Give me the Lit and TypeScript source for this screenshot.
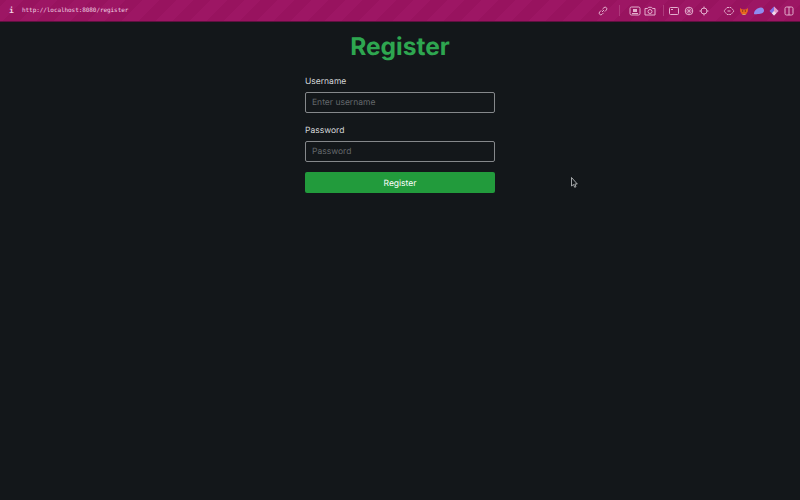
import { LitElement, html, css, svg } from 'lit';
import { customElement } from 'lit/decorators.js';

const line = (body: unknown) => html`<svg class="ico" width="12" height="12" viewBox="0 0 12 12" fill="none" stroke="#e3aecd" stroke-width="1">${body}</svg>`;

@customElement('app-root')
export class AppRoot extends LitElement {
  static styles = css`
    :host {
      display: block;
      position: relative;
      width: 800px;
      height: 500px;
      overflow: hidden;
      background: #13171a;
      font-family: Inter, 'Liberation Sans', sans-serif;
      text-rendering: geometricPrecision;
    }

    .bar {
      display: flex;
      align-items: center;
      height: 22px;
      box-sizing: border-box;
      padding-left: 9px;
      background: repeating-linear-gradient(
        -45deg,
        #98135f 0 12px,
        #9d1664 12px 24px
      );
      border-bottom: 1px solid #5f1040;
    }

    .info {
      width: 6px;
      color: #f3d5e6;
      font: 700 8px 'DejaVu Sans Mono', monospace;
    }

    .url {
      margin-left: 7px;
      color: #f0cfe2;
      font: 6px/10px 'DejaVu Sans Mono', monospace;
      letter-spacing: -0.07px;
    }

    .tools {
      display: flex;
      align-items: center;
      margin-left: auto;
      padding-right: 5px;
    }

    .ico {
      display: block;
    }

    .t1 { margin-right: 10px; }
    .t2 { margin-right: 3px; }
    .t3 { margin-right: 7px; }
    .t4 { margin-right: 13px; }

    .sep {
      width: 1px;
      height: 11px;
      background: #ad3a7c;
    }

    .s1 { margin-right: 9px; }
    .s2 { margin-right: 4px; }

    main {
      display: flex;
      flex-direction: column;
      width: 190px;
      margin: 0 auto;
    }

    h1 {
      margin: 7px 0 1px;
      text-align: center;
      color: #2ea650;
      font-size: 24.5px;
      line-height: 34px;
      font-weight: 700;
    }

    label {
      margin-top: 10px;
      color: #d4d6d8;
      font-size: 8.5px;
      line-height: 17px;
    }

    .input {
      box-sizing: border-box;
      height: 21px;
      margin-top: 1px;
      padding-left: 6px;
      border: 1px solid #85888b;
      border-radius: 2px;
      background: #13171a;
      color: #63676b;
      font-size: 8.5px;
      line-height: 21px;
    }

    button {
      height: 21px;
      margin-top: 10px;
      padding: 2px 0 0;
      border: none;
      border-radius: 2px;
      background: #229b3c;
      color: #fff;
      font: 8.5px Inter, 'Liberation Sans', sans-serif;
      text-rendering: geometricPrecision;
    }

    .cursor {
      position: absolute;
      left: 571px;
      top: 177px;
    }
  `;

  render() {
    return html`
      <div class="bar">
        <span class="info">i</span>
        <span class="url">http://localhost:8080/register</span>
        <div class="tools">
          <span class="t1">${line(svg`<path d="M5 7l2-2M4.200 5.400 2.600 7a1.700 1.700 0 0 0 2.400 2.400l1.600-1.600M5.400 4.200 7 2.600A1.700 1.700 0 0 1 9.400 5L7.800 6.600"/>`)}</span>
          <span class="sep s1"></span>
          <span class="t2">${line(svg`<rect x="1" y="2" width="10" height="8" rx="1.500"/><rect x="4" y="4" width="4" height="3" fill="#e3aecd" stroke="none"/><path d="M3 8.500h6"/>`)}</span>
          <span class="t3">${line(svg`<path d="M1 3.500h2.500l1-1.200h3l1 1.200H11v6.500H1z"/><circle cx="6" cy="6.500" r="2"/>`)}</span>
          <span class="sep s2"></span>
          <span class="t2">${line(svg`<rect x="1.500" y="2.500" width="9" height="7" rx="1"/><path d="M3 4.500h2"/>`)}</span>
          <span class="t2">${line(svg`<circle cx="6" cy="6" r="3.800"/><path d="M2.200 6h7.600M6 2.200v7.600M3.500 3.500l5 5M8.500 3.500l-5 5" stroke-width=".7"/>`)}</span>
          <span class="t4">${line(svg`<circle cx="6" cy="6" r="3"/><path d="M6 1.500v2M6 8.500v2M1.500 6h2M8.500 6h2"/>`)}</span>
          <span class="t2">${line(svg`<path d="M4 2.500h4L11 6 8 9.500H4L1 6z" stroke-dasharray="2 .6"/><path d="M4.500 6h3"/>`)}</span>
          <span class="t2">${html`<svg class="ico" width="12" height="12" viewBox="0 0 12 12"><path d="M2 3l2 1.500h4L10 3l-.2 3.500L8 9.500H4L2.200 6.500z" fill="#e8671f"/><path d="M4 5.500h1.200v1H4zM6.800 5.500H8v1H6.800z" fill="#5a2a10"/><path d="M4.500 9h3v1H4.500z" fill="#c9a070"/></svg>`}</span>
          <span class="t2">${html`<svg class="ico" width="12" height="12" viewBox="0 0 12 12"><path d="M1 9c0-3.500 3-6 7-6.500 1.500 0 3 1 3 3 0 2.500-3 3.500-6 3.500-2 0-3 .8-4 0z" fill="#8f8cf0"/></svg>`}</span>
          <span class="t2">${html`<svg class="ico" width="12" height="12" viewBox="0 0 12 12"><path d="M6 1.500 10.500 6 6 10.500 1.500 6z" fill="#7f6ee6"/><path d="M6 1.500 10.500 6 6 10.500z" fill="#e79ac7"/><path d="M3.800 8.200 6 6l2.200 2.200L6 10.500z" fill="#f3dcea"/></svg>`}</span>
          ${line(svg`<rect x="2" y="2" width="8" height="8" rx="1.500"/><path d="M6 2v8"/>`)}
        </div>
      </div>
      <main>
        <h1>Register</h1>
        <label>Username</label>
        <div class="input">Enter username</div>
        <label>Password</label>
        <div class="input">Password</div>
        <button>Register</button>
      </main>
      <svg class="cursor" width="8" height="12" viewBox="0 0 8 12">
        <path d="M.5.500v8.500l2-1.500 1.200 2.800 1.300-.6-1.200-2.700H6.300z" fill="#13171a" stroke="#c8cacc" stroke-width=".8"/>
      </svg>
    `;
  }
}

declare global {
  interface HTMLElementTagNameMap {
    'app-root': AppRoot;
  }
}
